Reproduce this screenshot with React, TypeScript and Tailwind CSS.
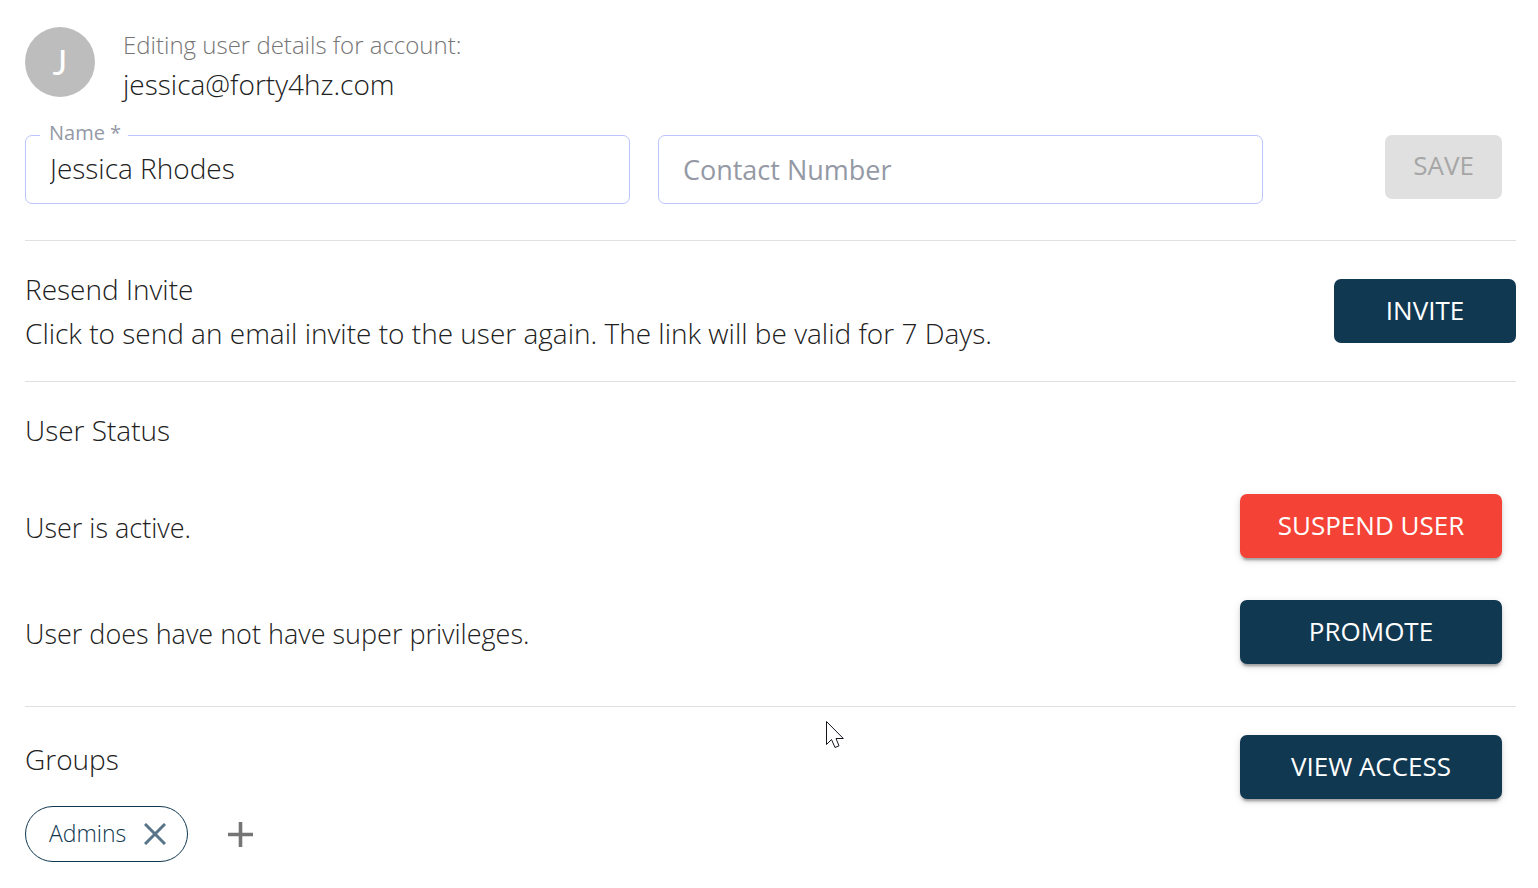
import { ReactNode, useState } from 'react';
import clsx from 'clsx';

const raised =
  'shadow-[0_5px_2px_-3px_rgba(0,0,0,0.2),0_3px_3px_0_rgba(0,0,0,0.14),0_2px_9px_0_rgba(0,0,0,0.12)]';

function ActionButton({
  children,
  className,
}: {
  children: ReactNode;
  className?: string;
}) {
  return (
    <button
      type="button"
      className={clsx(
        'h-16 shrink-0 rounded-[7px] pb-[2px] text-[26px] text-white',
        className
      )}
    >
      {children}
    </button>
  );
}

function SectionTitle({ children }: { children: ReactNode }) {
  return (
    <h2 className="text-[28px] leading-[44px] font-[350]">{children}</h2>
  );
}

function StatusRow({ text, children }: { text: string; children: ReactNode }) {
  return (
    <div className="flex items-center justify-between pr-[14px]">
      <p className="pt-[3px] text-[27px] leading-[44px] font-[350]">{text}</p>
      {children}
    </div>
  );
}

function CloseIcon() {
  return (
    <svg viewBox="0 0 22 22" className="size-[22px]" fill="none">
      <path d="M1 1L21 21M21 1L1 21" stroke="#577489" strokeWidth="3" />
    </svg>
  );
}

function AddIcon() {
  return (
    <svg viewBox="0 0 25 25" className="size-[25px]" fill="none">
      <path d="M12.5 0V25M0 12.5H25" stroke="#757575" strokeWidth="3.6" />
    </svg>
  );
}

function Cursor() {
  return (
    <svg
      viewBox="0 0 20 30"
      className="pointer-events-none absolute top-[720px] left-[826px] h-[30px] w-5"
    >
      <path
        d="M0.5 1.5V24.5L5.5 19.5L9 27.5L13 25.8L10 18.5H17.3Z"
        fill="#fff"
        stroke="#14141f"
      />
    </svg>
  );
}

export default function App() {
  const [name, setName] = useState('Jessica Rhodes');
  const [contact, setContact] = useState('');

  return (
    <div className="relative bg-white pt-[27px] pr-[22px] pb-6 pl-[25px] font-['Open_Sans',sans-serif] text-[#212121]">
      <div className="flex gap-7">
        <div className="flex size-[70px] items-center justify-center rounded-full bg-[#bdbdbd] pb-[2px] font-['Lato',sans-serif] text-[35px] text-white">
          J
        </div>
        <div>
          <p className="text-2xl leading-[35px] font-[350] text-[#757575]">
            Editing user details for account:
          </p>
          <h1 className="text-[28px] leading-[44px] font-[350]">
            jessica@forty4hz.com
          </h1>
        </div>
      </div>

      <form className="mt-[29px] grid grid-cols-12 gap-x-7 border-b border-[#e0e0e0] pb-9">
        <div className="relative col-span-5">
          <label
            htmlFor="name"
            className="absolute -top-4 left-[15px] bg-white pr-[7px] pl-[9px] text-xl leading-7 text-[#9499a5]"
          >
            Name *
          </label>
          <input
            id="name"
            value={name}
            onChange={(e) => setName(e.target.value)}
            className="h-[69px] w-full rounded-[7px] border border-[#bbc5fb] px-6 pb-[3px] text-[28px] font-[350]"
          />
        </div>
        <div className="col-span-5">
          <input
            aria-label="Contact Number"
            placeholder="Contact Number"
            value={contact}
            onChange={(e) => setContact(e.target.value)}
            className="h-[69px] w-full rounded-[7px] border border-[#bbc5fb] px-6 text-[27px] placeholder:text-[#9499a5]"
          />
        </div>
        <div className="col-span-2 flex justify-end pr-[14px]">
          <button
            type="submit"
            disabled
            className="h-16 rounded-[7px] bg-[#e0e0e0] px-7 pb-[3px] text-[26px] text-[#a6a6a6]"
          >
            SAVE
          </button>
        </div>
      </form>

      <div className="flex items-center justify-between border-b border-[#e0e0e0] py-[26px]">
        <div>
          <SectionTitle>Resend Invite</SectionTitle>
          <p className="text-[28px] leading-[44px] font-[350]">
            Click to send an email invite to the user again. The link will be
            valid for 7 Days.
          </p>
        </div>
        <ActionButton className="w-[182px] bg-[#103851]">INVITE</ActionButton>
      </div>

      <div className="border-b border-[#e0e0e0] pt-[26px] pb-[42px]">
        <SectionTitle>User Status</SectionTitle>
        <div className="mt-[42px] flex flex-col gap-[42px]">
          <StatusRow text="User is active.">
            <ActionButton className={clsx('w-[262px] bg-[#f44336]', raised)}>
              SUSPEND USER
            </ActionButton>
          </StatusRow>
          <StatusRow text="User does have not have super privileges.">
            <ActionButton className={clsx('w-[262px] bg-[#103851]', raised)}>
              PROMOTE
            </ActionButton>
          </StatusRow>
        </div>
      </div>

      <div className="flex items-start justify-between pt-7 pr-[14px]">
        <div className="pt-[2px]">
          <SectionTitle>Groups</SectionTitle>
          <div className="mt-[25px] flex items-center gap-10">
            <div className="flex h-14 items-center gap-[18px] rounded-full border border-[#103851] pr-[21px] pl-[23px] text-[23px] font-[350] text-[#103851]">
              <span className="pb-[2px]">Admins</span>
              <button type="button" aria-label="Remove Admins">
                <CloseIcon />
              </button>
            </div>
            <button type="button" aria-label="Add group">
              <AddIcon />
            </button>
          </div>
        </div>
        <ActionButton className={clsx('w-[262px] bg-[#103851]', raised)}>
          VIEW ACCESS
        </ActionButton>
      </div>

      <Cursor />
    </div>
  );
}
